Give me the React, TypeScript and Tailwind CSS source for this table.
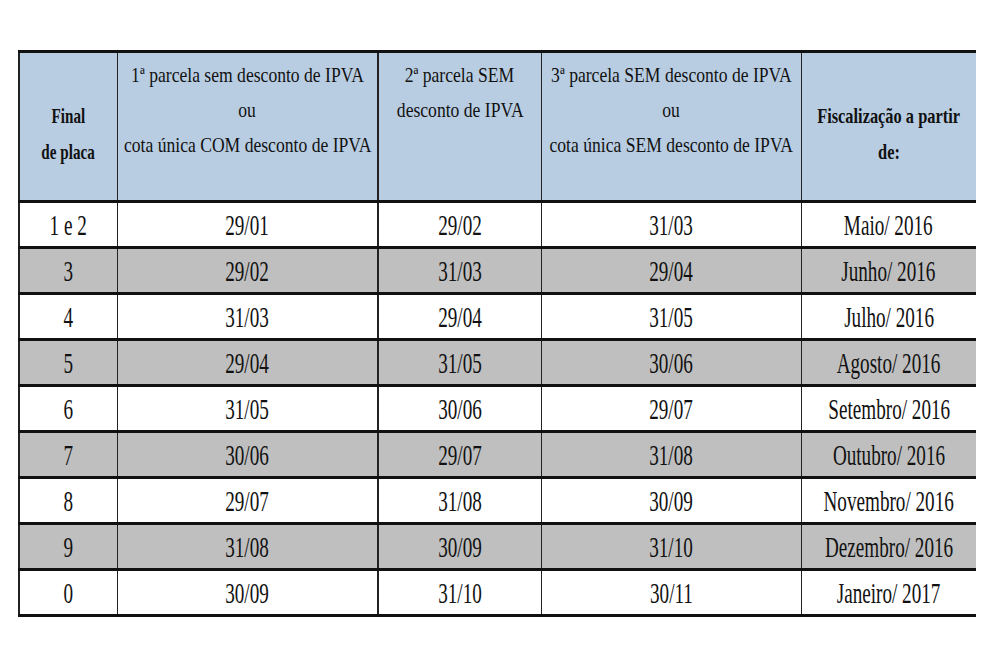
const rows = [
  ["1 e 2", "29/01", "29/02", "31/03", "Maio/ 2016"],
  ["3", "29/02", "31/03", "29/04", "Junho/ 2016"],
  ["4", "31/03", "29/04", "31/05", "Julho/ 2016"],
  ["5", "29/04", "31/05", "30/06", "Agosto/ 2016"],
  ["6", "31/05", "30/06", "29/07", "Setembro/ 2016"],
  ["7", "30/06", "29/07", "31/08", "Outubro/ 2016"],
  ["8", "29/07", "31/08", "30/09", "Novembro/ 2016"],
  ["9", "31/08", "30/09", "31/10", "Dezembro/ 2016"],
  ["0", "30/09", "31/10", "30/11", "Janeiro/ 2017"],
];

// the source image is squashed sideways, so every line is narrowed in place
const Line = ({ children, className = "scale-x-[0.8]" }: { children: React.ReactNode; className?: string }) => (
  <div className="flex justify-center">
    <span className={`inline-block whitespace-nowrap origin-center ${className}`}>{children}</span>
  </div>
);

const App = () => {
  return (
    <div className="w-[1000px] h-[664px] bg-white pt-[50px] pl-[18px] font-['Liberation_Serif',serif] text-[#111]">
      <table className="table-fixed border-collapse w-[957px]">
        <colgroup>
          <col className="w-[98px]" />
          <col className="w-[261px]" />
          <col className="w-[163px]" />
          <col className="w-[260px]" />
          <col className="w-[175px]" />
        </colgroup>
        <thead>
          <tr className="h-[150px] bg-[#b8cde2] border-t-[3px] border-b-[3px] border-[#111]">
            <th className="border-l-2 border-r border-[#222] align-middle text-center font-bold text-[21px] leading-[36px] pt-[14px]">
              <Line className="scale-x-[0.72]">Final</Line>
              <Line className="scale-x-[0.72]">de placa</Line>
            </th>
            <th className="border-r-2 border-[#222] align-top text-center font-normal text-[22px] leading-[35px] pt-[4px]">
              <Line>1ª parcela sem desconto de IPVA</Line>
              <Line>ou</Line>
              <Line>cota única COM desconto de IPVA</Line>
            </th>
            <th className="border-r border-[#222] align-top text-center font-normal text-[22px] leading-[35px] pt-[4px]">
              <Line>2ª parcela SEM</Line>
              <Line>desconto de IPVA</Line>
            </th>
            <th className="border-r border-[#222] align-top text-center font-normal text-[22px] leading-[35px] pt-[4px]">
              <Line>3ª parcela SEM desconto de IPVA</Line>
              <Line>ou</Line>
              <Line>cota única SEM desconto de IPVA</Line>
            </th>
            <th className="align-middle text-center font-bold text-[21px] leading-[36px] pt-[14px]">
              <Line className="scale-x-[0.78]">Fiscalização a partir</Line>
              <Line className="scale-x-[0.78]">de:</Line>
            </th>
          </tr>
        </thead>
        <tbody>
          {rows.map((r, i) => (
            <tr
              key={i}
              className={`h-[46px] ${i % 2 === 1 ? "bg-[#bfbfbf]" : "bg-white"} ${
                i === 0 ? "" : "border-t-[3px] border-[#111]"
              } ${i === rows.length - 1 ? "border-b-[3px] border-[#111]" : ""}`}
            >
              {r.map((c, j) => (
                <td
                  key={j}
                  className={`text-center align-middle text-[29px] leading-[40px] ${
                    j === 0 ? "border-l-2 border-r border-[#222]" : ""
                  } ${j === 1 ? "border-r-2 border-[#222]" : ""} ${
                    j === 2 || j === 3 ? "border-r border-[#222]" : ""
                  }`}
                >
                  <Line className="scale-x-[0.66]">{c}</Line>
                </td>
              ))}
            </tr>
          ))}
        </tbody>
      </table>
    </div>
  );
};

export default App;
